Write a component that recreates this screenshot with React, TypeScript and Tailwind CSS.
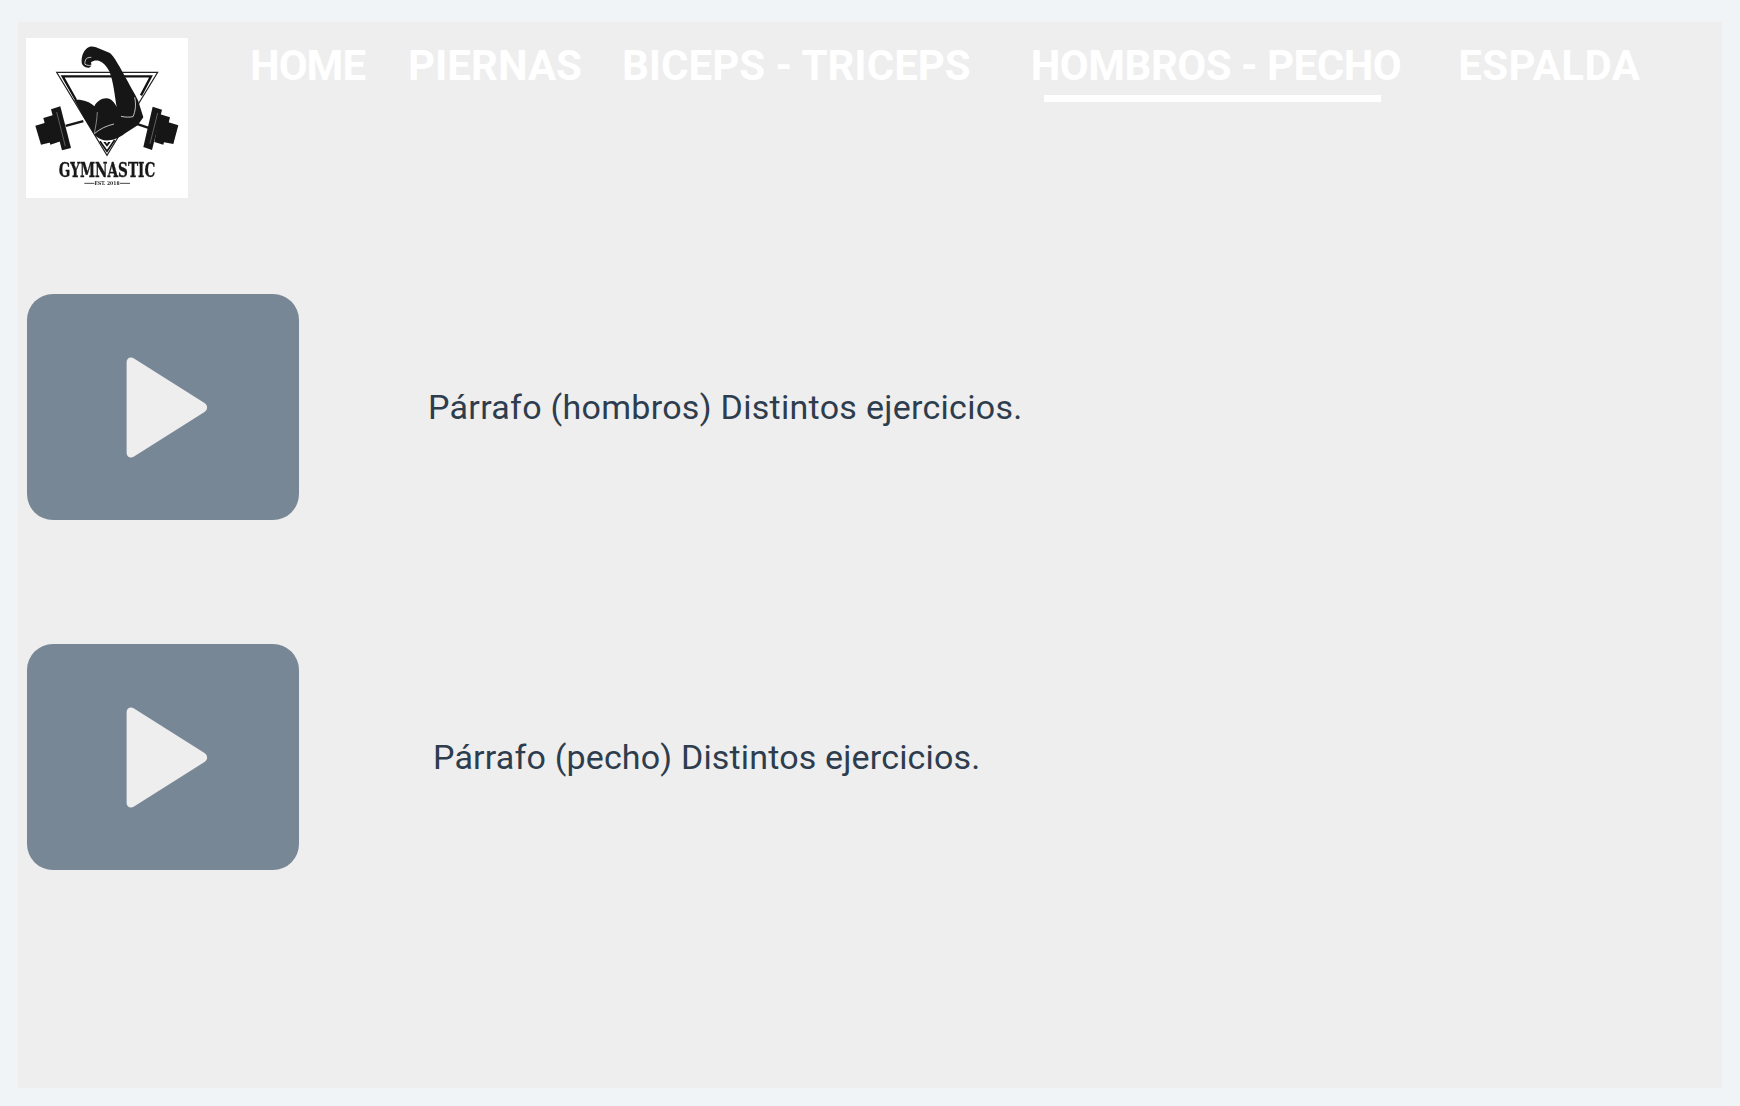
import React from "react";

const Logo = () => (
  <div className="w-[162px] h-[160px] bg-white shrink-0">
    <svg viewBox="0 0 486 480" className="w-full h-full block blur-[0.4px]">
      <path d="M92 103H395L243 352Z" fill="none" stroke="#222" strokeWidth="3.5" />
      <path d="M150 186L110 115H375L345 172" fill="none" stroke="#111" strokeWidth="7" />
      <path d="M222 310L243 340L266 306" fill="none" stroke="#111" strokeWidth="5" />
      <path d="M232 312L243 326L254 312L246 312L243 318L239 312Z" fill="#111" />
      <path d="M167 72C166 55 172 40 183 31C190 24 200 24 210 28L250 44C262 52 270 68 280 85L305 130C318 155 328 170 336 187L352 238L335 262L300 284C285 295 268 305 250 307C232 309 218 302 205 290L172 236L145 186C165 183 190 190 205 205C212 190 228 180 242 181C255 182 266 192 272 208C266 170 262 130 250 100C242 84 232 73 220 69C210 66 202 68 195 73C197 82 196 88 188 89C178 90 167 82 167 72Z" fill="#161616" />
      <path d="M196 58C187 58 181 60 179 65C177 71 176 76 177 79C183 82 190 83 195 82" fill="none" stroke="#e4e4e4" strokeWidth="2.5" />
      <path d="M205 287C222 272 243 263 264 258M285 235C298 238 310 238 321 236C328 220 331 200 326 178" fill="none" stroke="#e4e4e4" strokeWidth="2.5" />
      <path d="M205 287C209 265 213 245 214 222" fill="none" stroke="#bdbdbd" strokeWidth="2" />
      <g fill="#161616">
        <path d="M118 260L171 246L173 253L120 267Z" />
        <path d="M333 254L369 266L367 273L331 261Z" />
        <path d="M28 263L58 254L76 313L45 320Z" />
        <path d="M52 240L82 231L104 310L73 320Z" />
        <path d="M75 214L103 205L135 330L108 337Z" />
        <path d="M457 262L425 252L410 312L442 318Z" />
        <path d="M432 238L400 228L385 312L412 320Z" />
        <path d="M380 206L408 215L378 336L352 327Z" />
      </g>
      <path d="M92 222L118 325M395 225L372 317" fill="none" stroke="#cfcfcf" strokeWidth="1.2" />
      <text x="243" y="417" textAnchor="middle" fontFamily="'DejaVu Serif Condensed','DejaVu Serif',serif" fontWeight="700" fontSize="60" textLength="290" lengthAdjust="spacingAndGlyphs" fill="#181818" stroke="#181818" strokeWidth="1">GYMNASTIC</text>
      <path d="M175 436H205M282 436H312" stroke="#222" strokeWidth="2.5" />
      <text x="243" y="442" textAnchor="middle" fontFamily="'DejaVu Serif Condensed','DejaVu Serif',serif" fontWeight="700" fontSize="15" fill="#222">EST. 2018</text>
    </svg>
  </div>
);

const NavItem = ({ label, className = "" }: { label: string; className?: string }) => (
  <a className={`block whitespace-nowrap text-white font-bold text-[42px] leading-[48px] [font-family:'Roboto','Liberation_Sans',sans-serif] ${className}`}>{label}</a>
);

const PlayCard = ({ text, textClass }: { text: string; textClass: string }) => (
  <div className="flex items-center">
    <div className="w-[272px] h-[226px] rounded-[26px] bg-[#788796] flex items-center justify-center pl-[8px] shrink-0">
      <svg width="82" height="101" viewBox="0 0 82 101" className="block">
        <path d="M5 0.5C2.5 0.5 0.6 2.3 0.6 5V96C0.6 98.7 2.5 100.5 5 100.5C6 100.5 7 100.2 8 99.6L78.5 55C82 53 82 48 78.5 46L8 1.4C7 0.8 6 0.5 5 0.5Z" fill="#eeeeee" />
      </svg>
    </div>
    <p className={`text-[34px] leading-[40px] text-[#2e3d4d] whitespace-nowrap [font-family:'Roboto','Liberation_Sans',sans-serif] ${textClass}`}>{text}</p>
  </div>
);

export default function App() {
  return (
    <div className="w-[1740px] h-[1106px] bg-[#f0f4f7] pt-[22px] pl-[18px] overflow-hidden">
      <div className="w-[1704px] h-[1066px] bg-[#eeeeee] pl-[8px] pt-[16px]">
        <header className="flex items-start">
          <Logo />
          <nav className="flex items-start pt-[4px]">
            <NavItem label="HOME" className="ml-[62px] tracking-[-1px]" />
            <NavItem label="PIERNAS" className="ml-[43px]" />
            <NavItem label="BICEPS - TRICEPS" className="ml-[40px]" />
            <div className="ml-[60px] flex flex-col items-start">
              <NavItem label="HOMBROS - PECHO" className="tracking-[-0.5px]" />
              <div className="w-[337px] h-[7px] bg-white mt-[5px] ml-[13px]" />
            </div>
            <NavItem label="ESPALDA" className="ml-[57px] tracking-[0.4px]" />
          </nav>
        </header>
        <main className="pl-px pt-[96px] flex flex-col gap-[124px]">
          <PlayCard text="Párrafo (hombros) Distintos ejercicios." textClass="ml-[129px] tracking-[0.29px]" />
          <PlayCard text="Párrafo (pecho) Distintos ejercicios." textClass="ml-[134px] tracking-[0.17px]" />
        </main>
      </div>
    </div>
  );
}
